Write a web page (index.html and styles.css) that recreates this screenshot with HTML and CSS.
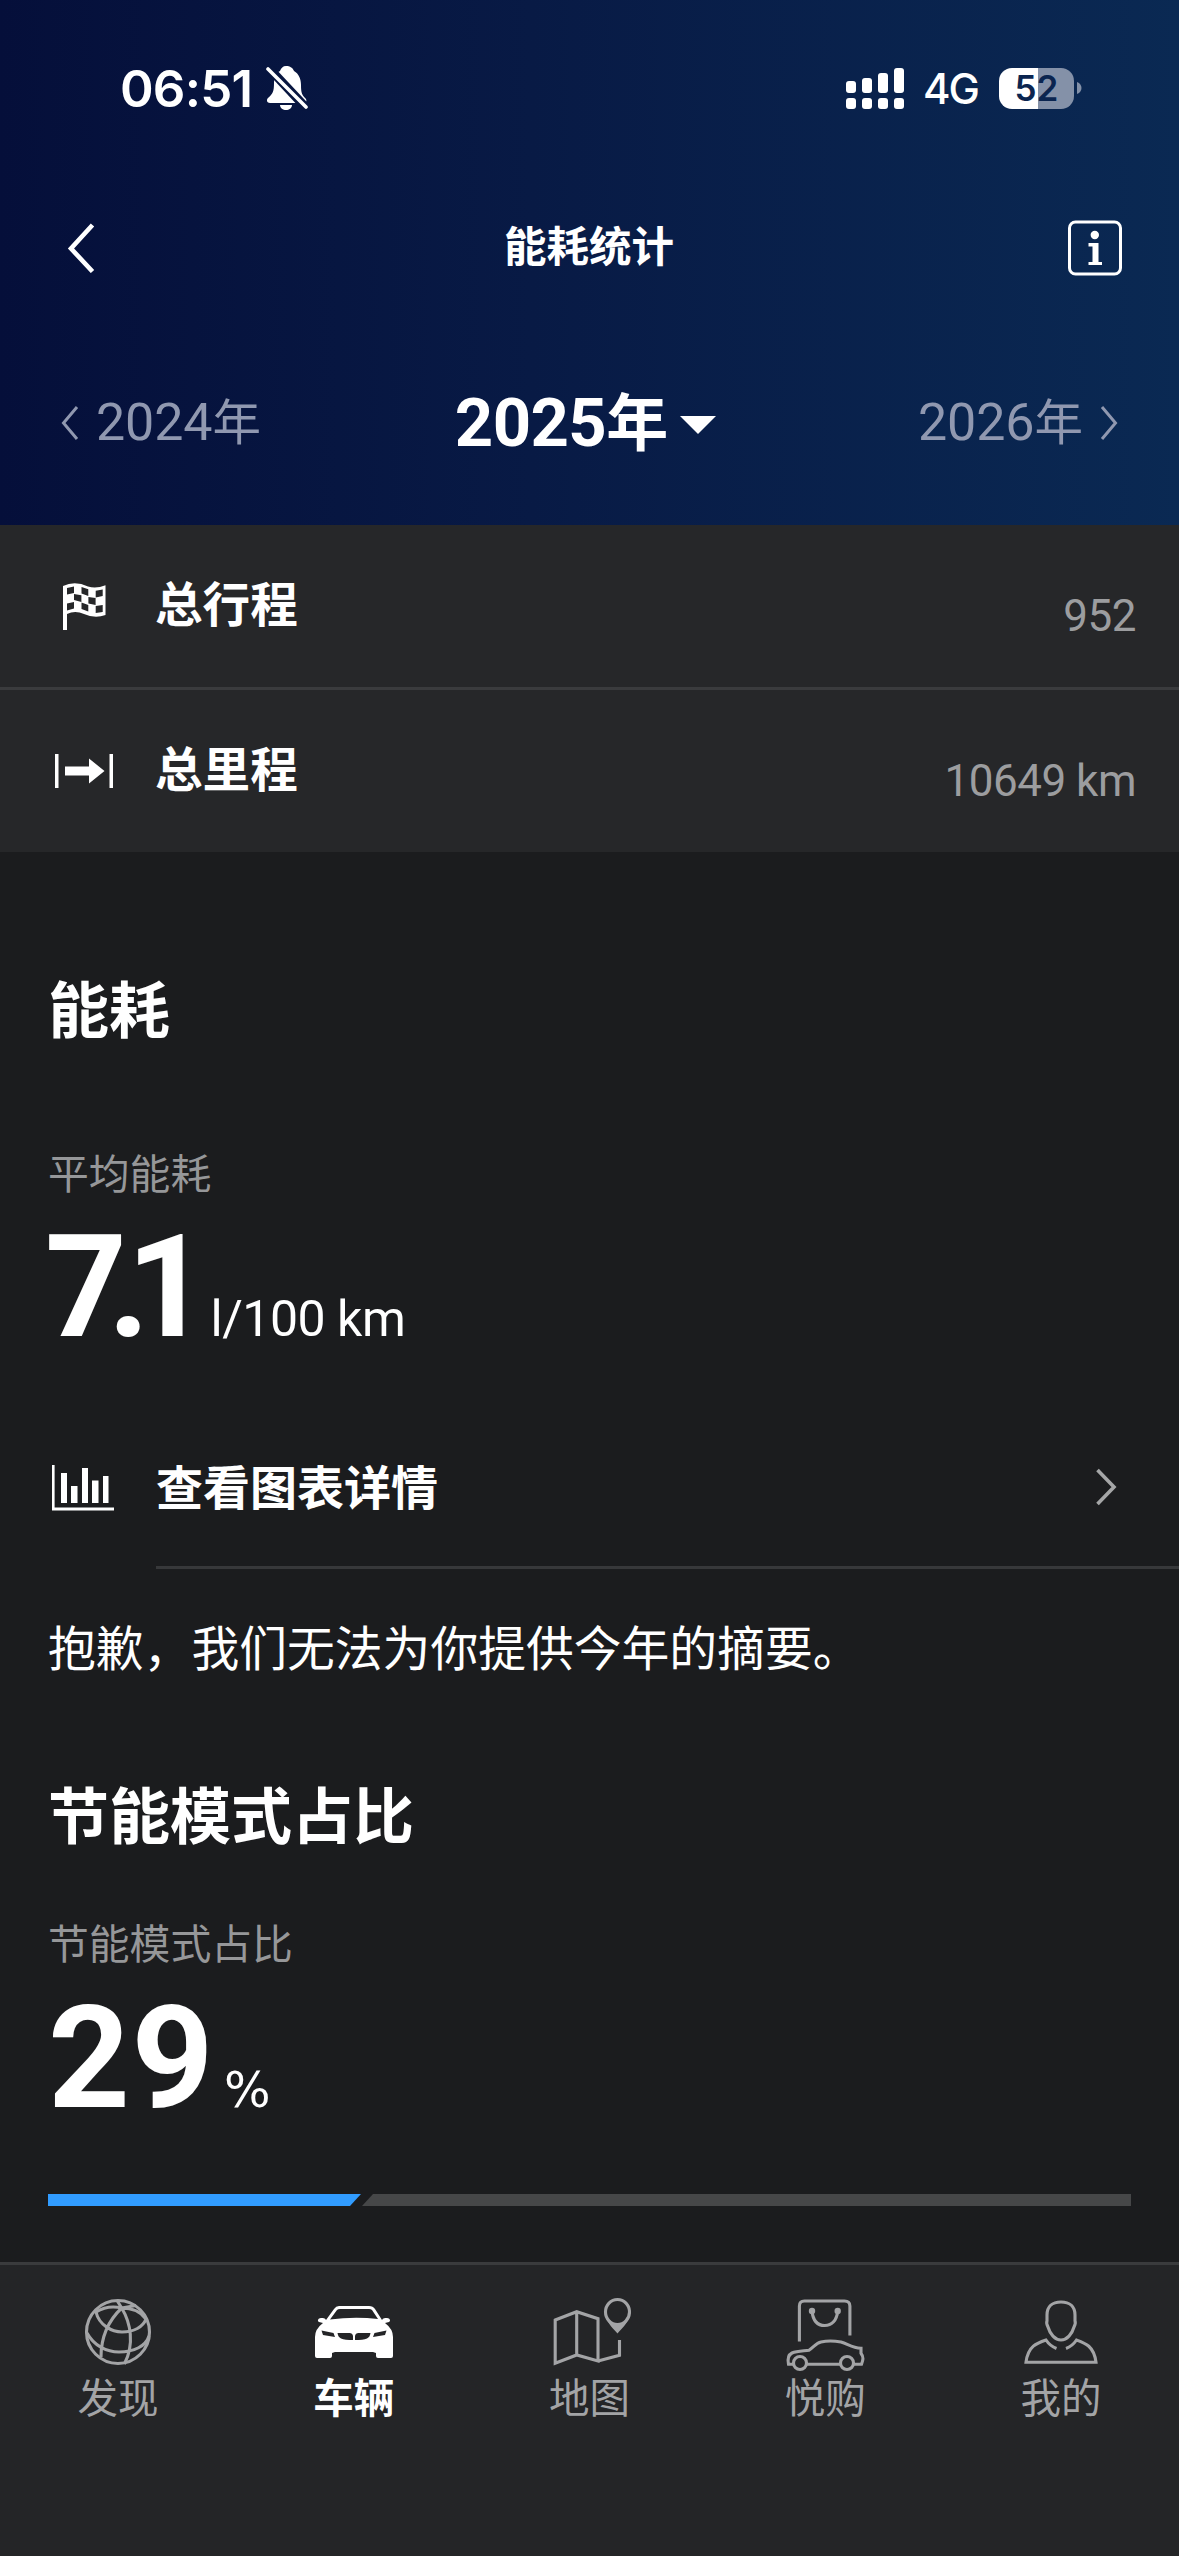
FILE: index.html
```html
<!DOCTYPE html>
<html lang="zh-CN">
<head>
<meta charset="utf-8">
<title>能耗统计</title>
<link rel="stylesheet" href="styles.css">
</head>
<body>
<div class="screen">
  <header class="top">
    <div class="status">
      <span class="time">06:51</span>
      <svg class="bell" width="42" height="46" viewBox="0 0 42 46">
        <path fill="#fff" d="M20 1c4 0 7 2 8 5 5 3 7 8 7 14 0 8 1 10 5 14 1 2 0 4-2 4H4c-3 0-4-3-2-5 5-4 6-7 6-15 0-6 2-10 6-12 1-3 3-5 6-5z"/>
        <path fill="#fff" d="M14 40h12c0 3-3 5-6 5s-6-2-6-5z"/>
        <path stroke="#07153f" stroke-width="9" d="M0 0l43 46"/>
        <path stroke="#fff" stroke-width="3.6" stroke-linecap="round" d="M2 4l38 38"/>
      </svg>
      <span class="spacer"></span>
      <svg class="signal" width="58" height="41" viewBox="0 0 58 41" fill="#fff">
        <rect x="0" y="13" width="10" height="12" rx="3"/><rect x="16" y="10" width="10" height="15" rx="3"/><rect x="32" y="5" width="10" height="20" rx="3"/><rect x="48" y="0" width="10" height="25" rx="3"/>
        <rect x="0" y="30" width="10" height="11" rx="3"/><rect x="16" y="30" width="10" height="11" rx="3"/><rect x="32" y="30" width="10" height="11" rx="3"/><rect x="48" y="30" width="10" height="11" rx="3"/>
      </svg>
      <span class="network">4G</span>
      <span class="battery">52</span>
      <svg class="nub" width="5" height="12" viewBox="0 0 5 12"><path fill="#8491a8" d="M0 0c6 2 6 10 0 12z"/></svg>
    </div>
    <div class="titlebar">
      <svg width="28" height="50" viewBox="0 0 28 50" fill="none" stroke="#fff" stroke-width="4.600"><path d="M25.500 2L4 25.500l21.500 23"/></svg>
      <h1>能耗统计</h1>
      <svg width="54" height="56" viewBox="0 0 54 56"><rect x="1.5" y="2" width="51" height="52" rx="6" fill="none" stroke="#fff" stroke-width="3"/><g fill="#fff"><circle cx="26.8" cy="15" r="4.2"/><path d="M20.500 23h10v19h3.500v3H20.500v-3h4V26.500h-4z"/></g></svg>
    </div>
    <div class="years">
      <div class="year side">
        <svg width="18" height="34" viewBox="0 0 18 34" fill="none" stroke="#9098b0" stroke-width="3"><path d="M16 1L2.500 17 16 33"/></svg>
        <span><b class="num">2024</b>年</span>
      </div>
      <div class="year now">
        <span><b class="num">2025</b>年</span>
        <svg width="36" height="18" viewBox="0 0 36 18"><path fill="#fff" d="M0 0h36L18 18z"/></svg>
      </div>
      <div class="year side">
        <span><b class="num">2026</b>年</span>
        <svg width="18" height="34" viewBox="0 0 18 34" fill="none" stroke="#9098b0" stroke-width="3"><path d="M2 1l13.500 16L2 33"/></svg>
      </div>
    </div>
  </header>

  <section class="totals">
    <div class="row">
      <svg width="60" height="48" viewBox="0 0 60 48">
        <path fill="#fff" fill-rule="evenodd" d="M9 4Q21-1.500 34 4.500 42 7 51.500 3.300V33Q41 37 30 32 21 28 13 32V48H9zM13 6l7-1.500V11l-7 1.500zM27.500 5l6.800 2.300V14l-6.800-2.500zM41.700 8.700l7-1.200V14l-7 1.500zM20 12l7.400 1.300V20L20 18zM34.400 15l7.200 1v7l-7.200-1.500zM13 21.500l7-1.500v6.500l-7 2zM27.500 20.500l6.800 2.500v6.500L27.500 27zM41.700 24l7-1v7l-7 1z"/>
      </svg>
      <span class="label">总行程</span>
      <span class="value">952</span>
    </div>
    <div class="row">
      <svg width="60" height="36" viewBox="0 0 60 36" fill="#fff"><path d="M1 1h3.500v34H1zM55.500 1H59v34h-3.500zM11 13.500h24V5.500l15.500 12.500L35 30.500v-8H11z"/></svg>
      <span class="label">总里程</span>
      <span class="value">10649 km</span>
    </div>
  </section>

  <main>
    <h2>能耗</h2>
    <p class="caption first">平均能耗</p>
    <p class="figure average"><strong><span class="seven">7</span><span class="dot">.</span>1</strong><span class="unit">l/100 km</span></p>
    <a class="detail">
      <svg width="64" height="48" viewBox="0 0 64 48" fill="#fff"><path d="M1 1h2.600v42.500H63v3H1zM10 9h6v30h-6zM20 22h6.500v17H20zM31 4h6v35h-6zM41 16.500h6.500V39H41zM52 12h5.500v27H52z"/></svg>
      <span class="detail-body"><span class="label">查看图表详情</span>
      <svg width="22" height="38" viewBox="0 0 22 38" fill="none" stroke="#a5a6a7" stroke-width="3.600"><path d="M1.500 2l16.500 17L1.500 36"/></svg></span>
    </a>
    <p class="message">抱歉，我们无法为你提供今年的摘要。</p>
    <h2 class="eco">节能模式占比</h2>
    <p class="caption">节能模式占比</p>
    <p class="figure ratio"><strong>29</strong><span class="unit">%</span></p>
    <div class="bar"><span class="used"></span><span class="rest"></span></div>
  </main>

  <nav class="tabs">
    <a class="tab">
      <svg width="84" height="84" viewBox="0 0 84 84" fill="none" stroke="#a3a4a6" stroke-width="3.100">
        <circle cx="42" cy="40" r="31.500"/>
        <path d="M45.700 16C33 28 25 44 25 65M45.700 16c9 15 13 36 2.700 56M40.700 8l5 8M60 13.500l-14.300 2.500M45.700 16C37 14 28 15 20 20c3 13 16 20 26 20 12 0 21-5 24-13-5-7-14-11-24.300-11M11 41c7 13 20 19 32 19 15 0 27-6 30-16"/>
      </svg>
      <span>发现</span>
    </a>
    <a class="tab active">
      <svg width="84" height="84" viewBox="0 0 84 84">
        <path fill="#fff" fill-rule="evenodd" d="M22 17q2-3 5-3h30q4 0 6 3l7 11c1-2 3-2 5-2 3 0 4 3 2 4l-4 1q8 6 8 14v19q0 2-2 2H66q-2 0-2-2v-3l-3-1H23l-3 1v3q0 2-2 2H5q-2 0-2-2V45q0-8 8-14l-4-1c-2-1-1-4 2-4 2 0 4 0 5 2zM25 18l-7 9.500q24-3 48-.5l-6-9q-1-1-3-1H28q-2 0-3 1zM9.500 38.500l12 2.500 1.500 4-12-2zM74.500 38.500l-12 2.500-1.500 4 12-2zM25.500 41h12q3 0 3.500 3v4q-8 0-12-1.500-3-1.500-3.500-5.500zM58.500 41h-12q-3 0-3.500 3v4q8 0 12-1.500 3-1.500 3.500-5.500z"/>
      </svg>
      <span>车辆</span>
    </a>
    <a class="tab">
      <svg width="84" height="84" viewBox="0 0 84 84" fill="none" stroke="#a3a4a6" stroke-width="3.100">
        <path d="M8.200 28l21.500-8.300L51 26.700V69l-21.300-6-21.500 8.300zM29.700 20v43M51 69l21.500-5.700V48"/>
        <ellipse cx="70.500" cy="20" rx="12" ry="12.500"/>
        <path fill="#a3a4a6" stroke="none" d="M58.800 25c3 8 7 11 11.700 16.500 4.500-5.500 9-8.500 11.700-16.500-5 9-17 9-23.400 0z"/>
      </svg>
      <span>地图</span>
    </a>
    <a class="tab">
      <svg width="84" height="84" viewBox="0 0 84 84" fill="none" stroke="#a3a4a6" stroke-width="3.100">
        <path d="M16.400 49.500V14q0-5 5-5h40q5.500 0 5.500 5v29.500M29 19c1 10 6 14.500 12.700 14.500S53.700 29 54.700 19"/>
        <g fill="#a3a4a6" stroke="none"><circle cx="29" cy="19" r="3.200"/><circle cx="54.700" cy="19" r="3.200"/></g>
        <path d="M10 72.300H5.500c-1-5-1-9 3.500-11.300 5-2 12-2 17-2.800C31 55 33 51 38 50c7-1.500 14-1 20 0 7 2 11 6 20 6.300v5c3 4 2 7 .5 11H71M24 72.300h33"/>
        <circle cx="17" cy="71" r="6.500"/><circle cx="64" cy="71" r="6.500"/>
      </svg>
      <span>悦购</span>
    </a>
    <a class="tab">
      <svg width="84" height="84" viewBox="0 0 84 84" fill="none" stroke="#a3a4a6" stroke-width="3.100">
        <path d="M42 10c9 0 14 5 14 13v6c1 2 0 4-1 6-2 7-7 13-13 13s-11-6-13-13c-1-2-2-4-1-6v-6c0-8 5-13 14-13zM37.500 56.500Q31 54 27 48c-9 3-18 6-20 22.300h70C75 54 66 51 57.500 48q-4 6-10.500 8.500"/>
      </svg>
      <span>我的</span>
    </a>
  </nav>
</div>
</body>
</html>
```
FILE: styles.css
```css
* { box-sizing: border-box; margin: 0; padding: 0; }

body {
  width: 1179px;
  background: #1b1c1e;
  color: #fff;
  font-family: "Noto Sans", "Noto Sans CJK SC", sans-serif;
}

svg { display: block; flex: none; }

.screen {
  display: flex;
  flex-direction: column;
  width: 1179px;
  height: 2556px;
  overflow: hidden;
}

.top {
  height: 525px;
  background: linear-gradient(90deg, #050f3a, #081a45 45%, #0a2953);
}

.status {
  display: flex;
  align-items: center;
  height: 176px;
  padding: 0 97px 0 120px;
  font-family: Inter, sans-serif;
}
.time { width: 146px; font-size: 51px; font-weight: 600; letter-spacing: -0.8px; white-space: nowrap; }
.spacer { flex: 1; }
.network { width: 75px; padding-left: 19px; font-size: 42px; font-weight: 500; letter-spacing: -2px; white-space: nowrap; }
.battery {
  width: 75px;
  height: 41px;
  margin-left: 20px;
  border-radius: 13px;
  background: linear-gradient(90deg, #fff 39px, #8491a8 39px);
  color: #0b2550;
  font-size: 35px;
  font-weight: 600;
  line-height: 41px;
  text-align: center;
}
.nub { margin-left: 3px; }

.titlebar {
  display: flex;
  align-items: center;
  justify-content: space-between;
  height: 144px;
  padding: 0 57px 0 67px;
}
.titlebar h1 {
  padding: 0 0 4px 15px;
  font-size: 42.500px;
  line-height: 60px;
  font-weight: 700;
}

.years {
  display: flex;
  align-items: center;
  justify-content: space-between;
  height: 205px;
  padding: 0 61px;
  font-family: "Noto Sans CJK SC", sans-serif;
}
.year { display: flex; align-items: center; white-space: nowrap; }
.year span { padding-bottom: 4px; }
.num { font-family: Roboto, sans-serif; font-weight: inherit; }
.side { gap: 17px; color: #9098b0; font-size: 48.500px; line-height: 100px; }
.side .num { font-size: 52px; letter-spacing: -0.1px; }
.now { gap: 12px; margin-right: 8px; font-size: 62px; font-weight: 700; line-height: 100px; }
.now svg { margin-top: 4px; }
.now .num { font-size: 67px; letter-spacing: -0.6px; }

.totals { display: flex; flex-direction: column; gap: 3px; height: 327px; background: #3a3b3d; }
.row {
  display: flex;
  align-items: center;
  height: 162px;
  padding: 0 43px 0 54px;
  background: #262729;
}
.label { font-size: 47px; line-height: 60px; font-weight: 700; white-space: nowrap; }
.row .label { margin: 0 0 5px 41px; font-size: 47.600px; }
.value { margin: 19px 0 0 auto; color: #9c9d9f; font-family: Roboto, sans-serif; font-size: 44px; line-height: 60px; letter-spacing: -0.5px; }

main { display: flex; flex-direction: column; height: 1410px; padding: 0 48px; }
h2 { margin-top: 118px; font-size: 61px; line-height: 80px; font-weight: 700; white-space: nowrap; }
.caption { color: #969799; font-size: 40.800px; line-height: 60px; white-space: nowrap; }
.first { margin-top: 93px; }
.figure { display: flex; align-items: baseline; height: 204px; padding-top: 14px; line-height: 140px; font-family: Roboto, sans-serif; }
.figure strong { font-size: 143px; font-weight: 700; }
.unit { font-size: 50px; white-space: nowrap; }
.average { margin-left: -3px; }
.average .unit { margin-left: 2px; letter-spacing: -0.5px; }
.seven { letter-spacing: -19px; }
.dot { letter-spacing: -23px; }

.detail { display: flex; align-items: center; gap: 41px; height: 162px; margin: 0 -48px 0 3px; }
.detail-body {
  display: flex;
  flex: 1;
  align-items: center;
  justify-content: space-between;
  height: 162px;
  padding-right: 61px;
  border-bottom: 3px solid #37383a;
}
.message { margin-top: 49px; font-size: 47.800px; line-height: 60px; white-space: nowrap; }
.eco { margin-top: 98px; }
.eco + .caption { margin-top: 57px; }
.ratio { height: 221px; padding-top: 15px; }
.ratio strong { letter-spacing: 1.500px; }
.ratio .unit { margin-left: 9px; font-family: "DejaVu Sans", sans-serif; font-size: 49px; }

.bar { display: flex; height: 12px; width: 1083px; }
.used { width: 313px; background: #319cff; clip-path: polygon(0 0, 100% 0, calc(100% - 11px) 100%, 0 100%); }
.rest { flex: 1; background: #464748; clip-path: polygon(12px 0, 100% 0, 100% 100%, 1px 100%); }

.tabs {
  display: grid;
  grid-template-columns: repeat(5, 1fr);
  height: 294px;
  padding-top: 27px;
  border-top: 3px solid #3a3b3d;
  background: #242527;
}
.tab {
  display: flex;
  flex-direction: column;
  align-items: center;
  color: #a3a4a6;
  font-size: 40.500px;
  line-height: 44px;
}
.active { color: #fff; font-weight: 700; }
```
